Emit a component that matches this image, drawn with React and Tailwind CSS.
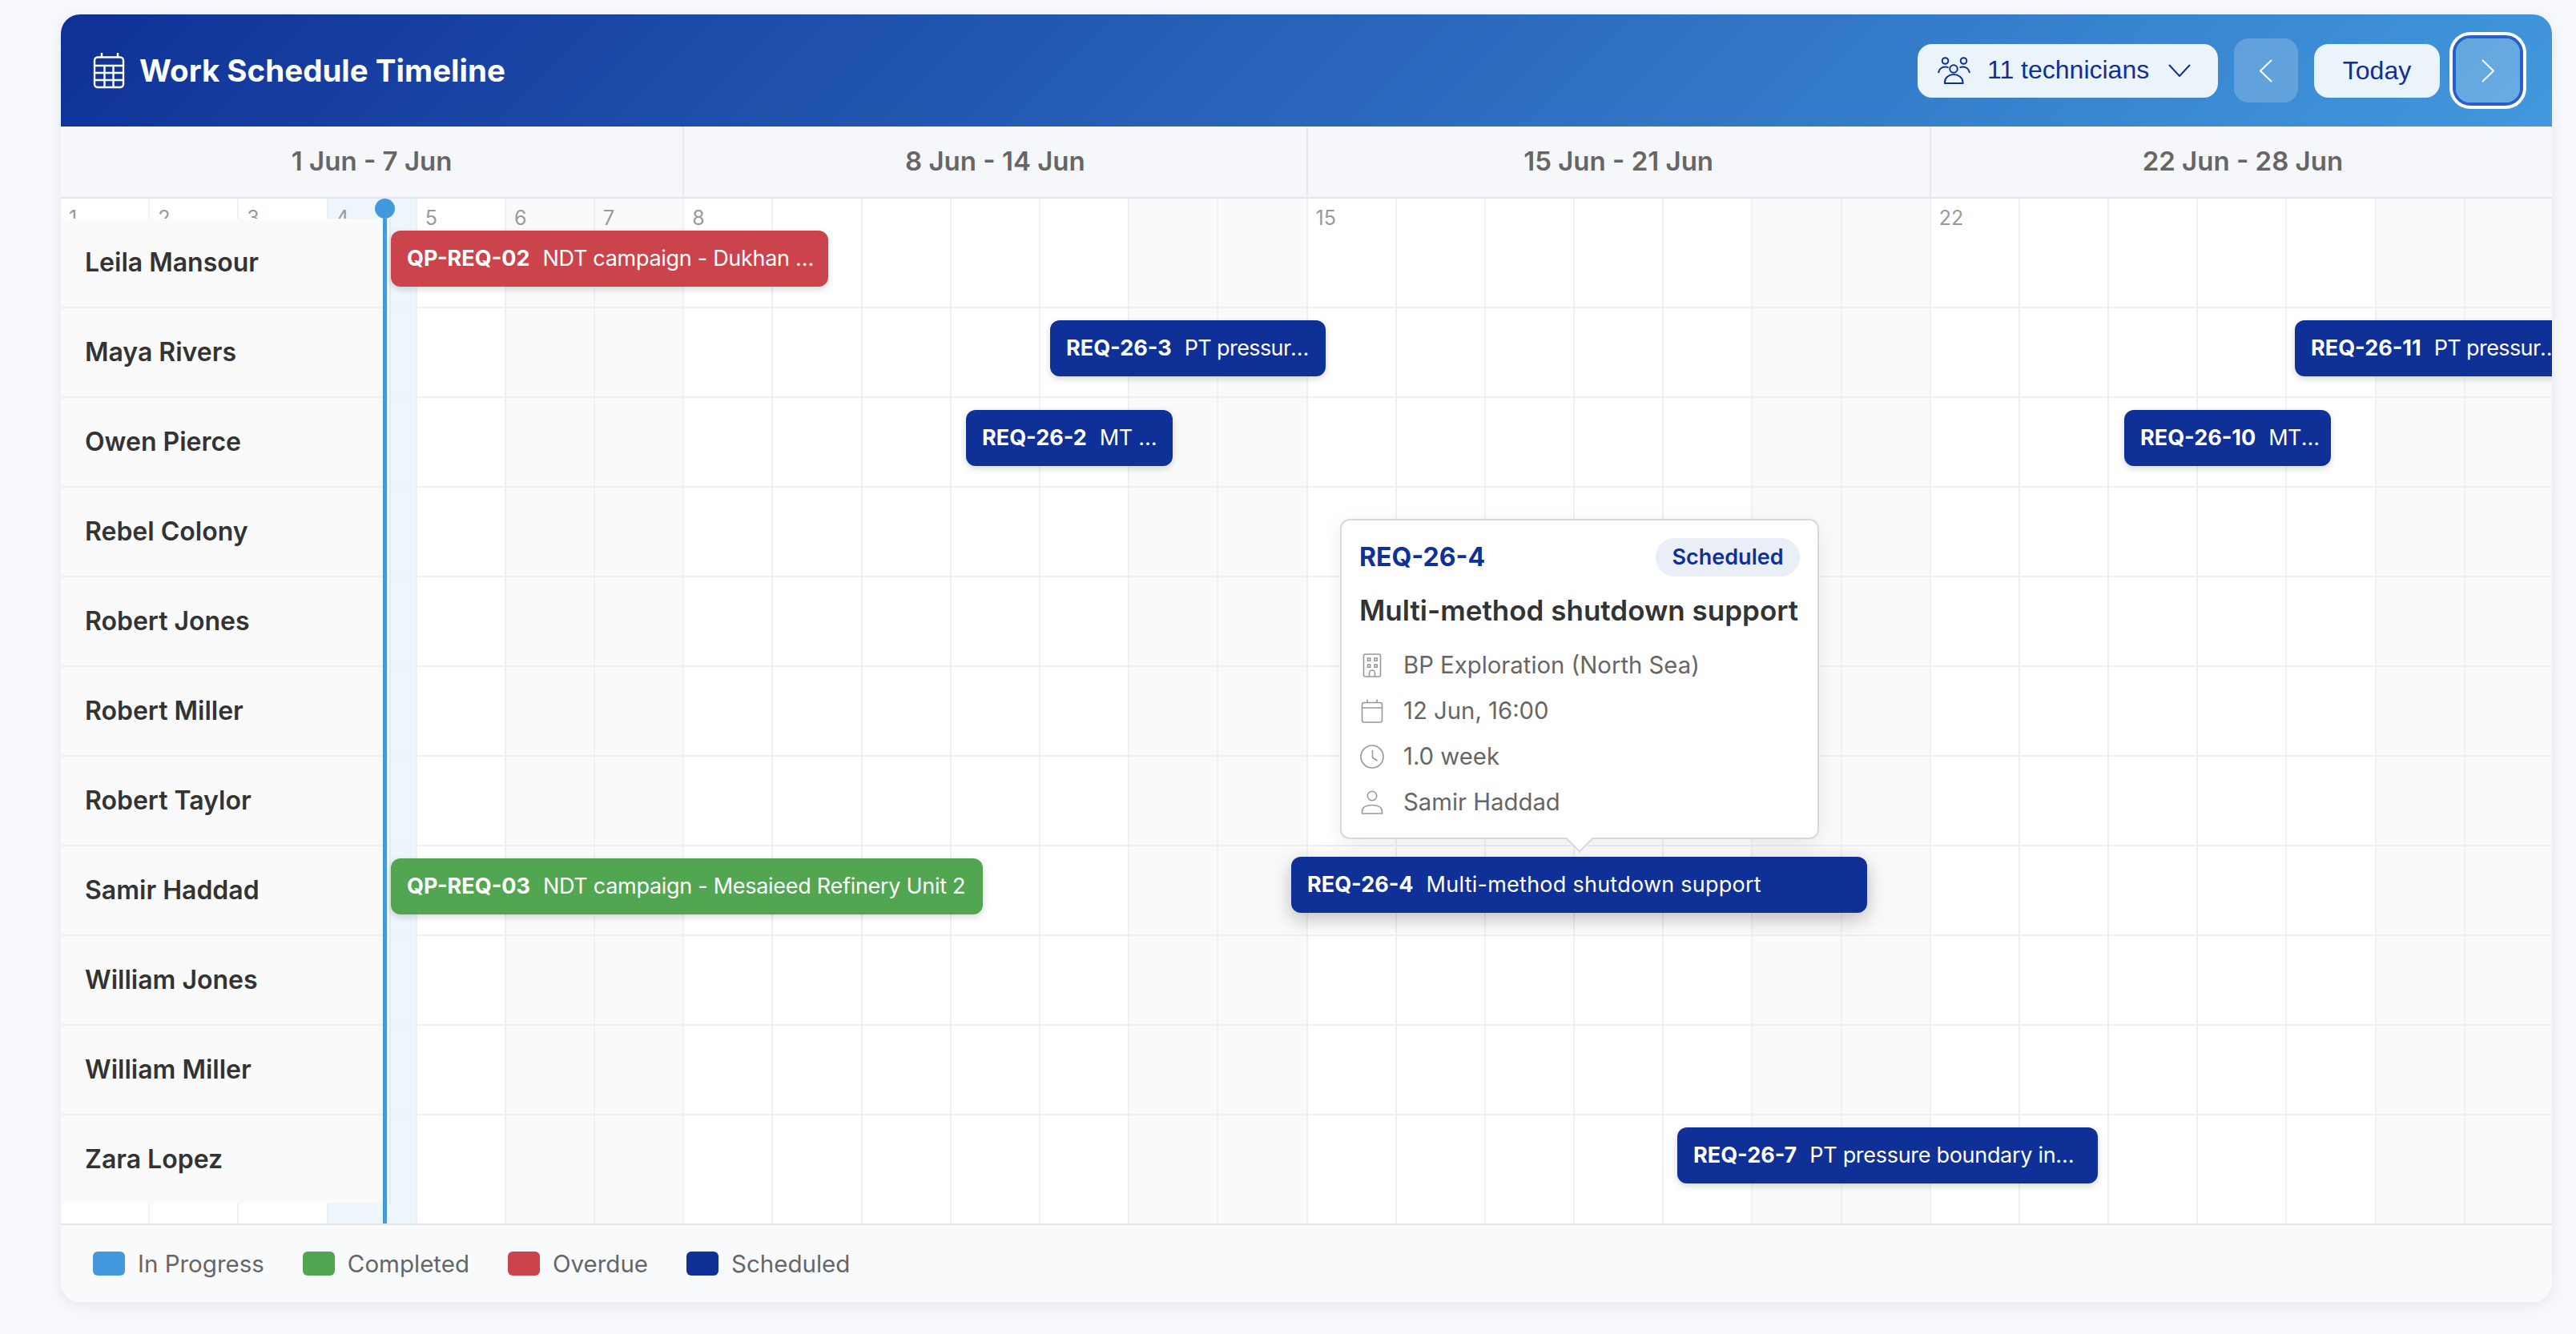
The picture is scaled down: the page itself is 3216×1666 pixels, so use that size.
const NAVY = "#0f3097";
const weeks = ["1 Jun - 7 Jun", "8 Jun - 14 Jun", "15 Jun - 21 Jun", "22 Jun - 28 Jun"];
const days = Array.from({ length: 28 }, (_, i) => i + 1);
const weekLabels = new Set([1, 2, 3, 4, 5, 6, 7, 8, 15, 22]);

const rows = [
  { name: "Leila Mansour", bars: [{ id: "QP-REQ-02", title: "NDT campaign - Dukhan Field Shutdown", left: 0, width: 546, cls: "bg-[#cb444b]", titleCls: "tracking-[-0.3px]", boxCls: "pr-[10px]" }] },
  {
    name: "Maya Rivers",
    bars: [
      { id: "REQ-26-3", title: "PT pressure boundary inspection", left: 823, width: 344, cls: "bg-[#0f3097]", titleCls: "tracking-[-0.6px]", boxCls: "pr-[14px]" },
      { id: "REQ-26-11", title: "PT pressure boundary inspection", left: 2377, width: 344, cls: "bg-[#0f3097]", titleCls: "tracking-[-0.6px]", boxCls: "pr-[8px]" },
    ],
  },
  {
    name: "Owen Pierce",
    bars: [
      { id: "REQ-26-2", title: "MT weld inspection", left: 718, width: 258, cls: "bg-[#0f3097]", titleCls: "tracking-[-0.3px]", boxCls: "pr-[12px]" },
      { id: "REQ-26-10", title: "MT weld inspection", left: 2164, width: 258, cls: "bg-[#0f3097]", titleCls: "tracking-[-0.6px]", boxCls: "pr-[12px]" },
    ],
  },
  { name: "Rebel Colony", bars: [] },
  { name: "Robert Jones", bars: [] },
  { name: "Robert Miller", bars: [] },
  { name: "Robert Taylor", bars: [] },
  {
    name: "Samir Haddad",
    bars: [
      { id: "QP-REQ-03", title: "NDT campaign - Mesaieed Refinery Unit 2", left: 0, width: 739, cls: "bg-[#52a651]", titleCls: "tracking-[-0.29px]" },
      { id: "REQ-26-4", title: "Multi-method shutdown support", left: 1124, width: 719, cls: "bg-[#0f3097] -translate-y-[2px] shadow-[0_8px_24px_rgba(0,0,0,0.25)]", titleCls: "tracking-[0.25px]" },
    ],
  },
  { name: "William Jones", bars: [] },
  { name: "William Miller", bars: [] },
  { name: "Zara Lopez", bars: [{ id: "REQ-26-7", title: "PT pressure boundary inspection round", left: 1606, width: 525, cls: "bg-[#0f3097]", titleCls: "tracking-[-0.3px]", boxCls: "pr-[28px]" }] },
];

const legend = [
  ["In Progress", "bg-[#4299dd]"],
  ["Completed", "bg-[#52a651]"],
  ["Overdue", "bg-[#cb444b]"],
  ["Scheduled", "bg-[#0f3097]"],
];

function CalendarGrid() {
  return (
    <svg width="40" height="46" viewBox="0 0 40 46" fill="none" stroke="white" strokeWidth="2.4" className="shrink-0">
      <rect x="2" y="6.5" width="36" height="37.5" rx="4" />
      <path d="M11 1v5M31 1v5M2 17h36M2 26h36M2 35h36M14.5 17v27M25.5 17v27" />
    </svg>
  );
}

function Users() {
  return (
    <svg width="42" height="34" viewBox="0 0 42 34" fill="none" stroke={NAVY} strokeWidth="2" className="shrink-0">
      <circle cx="10.5" cy="5" r="3.8" />
      <circle cx="33.5" cy="5" r="3.8" />
      <circle cx="21" cy="15" r="4.8" />
      <path d="M10 33v-1.5C10 26 15 22 21 22s11.5 4 11.5 9.5V33z" />
      <path d="M2 20c.8-4.600 4.200-7.500 8.500-7.500 1.500 0 2.800.3 4 1" />
      <path d="M41 20c-.8-4.600-4.200-7.500-8.500-7.500-1.500 0-2.800.3-4 1" />
    </svg>
  );
}

function Chevron({ dir, color, w, h, sw }) {
  const d =
    dir === "down"
      ? `M1 1L${w / 2} ${h - 1}L${w - 1} 1`
      : dir === "left"
      ? `M${w - 1} 1L1 ${h / 2}L${w - 1} ${h - 1}`
      : `M1 1L${w - 1} ${h / 2}L1 ${h - 1}`;
  return (
    <svg width={w} height={h} viewBox={`0 0 ${w} ${h}`} fill="none" stroke={color} strokeWidth={sw} className="shrink-0">
      <path d={d} />
    </svg>
  );
}

function Building() {
  return (
    <svg width="30" height="30" viewBox="0 0 30 30" fill="none" stroke="#999999" strokeWidth="1.6" className="shrink-0">
      <rect x="4.500" y="1" width="21" height="28" rx="2" />
      <rect x="9.500" y="6" width="3.200" height="3.200" />
      <rect x="18" y="6" width="3.200" height="3.200" />
      <rect x="9.500" y="14" width="3.200" height="3.200" />
      <rect x="18" y="14" width="3.200" height="3.200" />
      <path d="M11.500 29v-4.500a3.500 3.500 0 0 1 7 0V29" />
    </svg>
  );
}

function CalendarPlain() {
  return (
    <svg width="30" height="30" viewBox="0 0 30 30" fill="none" stroke="#999999" strokeWidth="1.6" className="shrink-0">
      <rect x="2.500" y="4.500" width="25" height="24.500" rx="2.500" />
      <path d="M2.500 11h25M9 .5v4M21 .5v4" />
    </svg>
  );
}

function Clock() {
  return (
    <svg width="30" height="30" viewBox="0 0 30 30" fill="none" stroke="#999999" strokeWidth="1.6" className="shrink-0">
      <circle cx="15" cy="15" r="14" />
      <path d="M15.500 7v9l6 4" />
    </svg>
  );
}

function Person() {
  return (
    <svg width="30" height="30" viewBox="0 0 30 30" fill="none" stroke="#999999" strokeWidth="1.6" className="shrink-0">
      <circle cx="15" cy="7" r="5.700" />
      <path d="M2.500 29v-2.500c0-5.500 5.500-8 12.500-8s12.500 2.500 12.500 8V29z" />
    </svg>
  );
}

function Bar({ bar }) {
  return (
    <div
      className={`absolute top-[15px] h-[70px] rounded-xl pl-5 flex items-center text-white shadow-[0_3px_8px_rgba(0,0,0,0.16)] ${bar.boxCls || "pr-5"} ${bar.cls}`}
      style={{ left: bar.left, width: bar.width }}
    >
      <div className="truncate text-[27px] leading-[40px]">
        <span className="font-bold mr-[16px]">{bar.id}</span>
        <span className={`font-normal ${bar.titleCls || ""}`}>{bar.title}</span>
      </div>
    </div>
  );
}

function InfoRow({ icon, text }) {
  return (
    <div className="flex items-center gap-[24px] pl-[1px] h-[57px] text-[29.3px] text-[#666666]">
      {icon}
      <span>{text}</span>
    </div>
  );
}

export default function App() {
  return (
    <div className="min-h-[1666px] bg-[#f8f9fd] pl-[76px] pr-[30px] pt-[18px] font-['Inter',sans-serif]">
      <div className="rounded-3xl overflow-hidden bg-white shadow-[0_4px_20px_rgba(0,0,0,0.08)]">
        <header className="h-[140px] flex items-center justify-between pl-[40px] pr-[40px] bg-[linear-gradient(135deg,#0f3097,#4299dd)]">
          <div className="flex items-center gap-[18px] text-white">
            <CalendarGrid />
            <h1 className="text-[38.5px] leading-[48px] font-bold">Work Schedule Timeline</h1>
          </div>
          <div className="flex items-center gap-5 font-['Liberation_Sans',sans-serif] text-[32px] text-[#0f3097]">
            <button className="w-[375px] h-[67px] rounded-[18px] bg-[#ebf3fb] flex items-center pl-[24px] gap-[21px]">
              <Users />
              <span className="-translate-y-[1px]">11 technicians</span>
              <span className="ml-[3px]"><Chevron dir="down" color={NAVY} w={28} h={16} sw={2} /></span>
            </button>
            <button className="w-20 h-20 rounded-[18px] bg-white/20 flex items-center justify-center">
              <Chevron dir="left" color="white" w={16} h={29} sw={2} />
            </button>
            <button className="w-[157px] h-[67px] rounded-[18px] bg-[#ebf3fb]">Today</button>
            <button className="w-20 h-20 rounded-[18px] bg-white/20 flex items-center justify-center outline-4 outline-[#2a5fc9] shadow-[0_0_0_8px_white]">
              <Chevron dir="right" color="white" w={16} h={29} sw={2} />
            </button>
          </div>
        </header>

        <div className="overflow-hidden h-[90px] bg-[#f6f7fb] border-b-2 border-[#e3e5ea]">
          <div className="grid grid-cols-4 w-[3113px] h-full">
            {weeks.map((w) => (
              <div key={w} className="flex items-center justify-center border-r-2 border-[#e8e9ed] last:border-r-0 text-[33px] font-semibold text-[#666666]">
                {w}
              </div>
            ))}
          </div>
        </div>

        <div className="relative h-[1280px] overflow-hidden">
          <div className="grid grid-cols-[repeat(28,1fr)] w-[3113px] h-full">
            {days.map((d) => {
              const weekend = d % 7 === 6 || d % 7 === 0;
              const bg = d === 4 ? "bg-[#edf5fd]" : weekend ? "bg-[#fafafa]" : "bg-white";
              return (
                <div key={d} className={`border-r-2 border-[#f0f0f2] pl-[10px] pt-[8px] text-[25px] leading-[32px] text-[#999999] ${bg}`}>
                  {weekLabels.has(d) ? d : ""}
                </div>
              );
            })}
          </div>

          <div className="absolute left-0 right-0 top-[25px] flex flex-col">
            {rows.map((r) => (
              <div key={r.name} className="flex h-[112px] border-b-2 border-[#f0f0f2] last:border-b-0 last:h-[110px]">
                <div className="w-[412px] shrink-0 bg-[#fafafa] border-r-2 border-[#e8e8ec] pl-[30px] flex items-center text-[32px] font-semibold text-[#333333]">
                  {r.name}
                </div>
                <div className="relative flex-1">
                  {r.bars.map((b) => (
                    <Bar key={b.id} bar={b} />
                  ))}
                </div>
              </div>
            ))}
          </div>

          <div className="absolute top-[25px] bottom-0 left-[402px] w-[5px] bg-[#4299dd]" />
          <div className="absolute top-0 left-[392px] w-[25px] h-[25px] rounded-full bg-[#4299dd]" />

          <div className="absolute left-[1597px] top-[400px] w-[598px] h-[400px] rounded-xl bg-white border-2 border-[#d9d9d9] px-[22px] pt-[22px] shadow-[0_6px_24px_rgba(0,0,0,0.08)]">
            <div className="flex items-center justify-between">
              <span className="text-[32px] font-bold text-[#0f3097]">REQ-26-4</span>
              <span className="h-[48px] w-[180px] rounded-full bg-[#e9eef7] flex items-center justify-center text-[27px] font-semibold text-[#0f3097]">
                Scheduled
              </span>
            </div>
            <div className="mt-[18px] text-[35px] leading-[48px] font-semibold text-[#333333] whitespace-nowrap">Multi-method shutdown support</div>
            <div className="mt-[16px] flex flex-col">
              <InfoRow icon={<Building />} text="BP Exploration (North Sea)" />
              <InfoRow icon={<CalendarPlain />} text="12 Jun, 16:00" />
              <InfoRow icon={<Clock />} text="1.0 week" />
              <InfoRow icon={<Person />} text="Samir Haddad" />
            </div>
            <div className="absolute left-1/2 -bottom-[14px] -ml-[12px] w-[24px] h-[24px] rotate-45 bg-white border-r-2 border-b-2 border-[#d9d9d9]" />
          </div>
        </div>

        <footer className="h-[98px] bg-[#f9fafb] border-t-2 border-[#e3e5ea] flex items-center pl-[40px] gap-12">
          {legend.map(([label, cls]) => (
            <div key={label} className="flex items-center gap-4 text-[29.5px] text-[#666666]">
              <span className={`w-10 h-[30px] rounded-md ${cls}`} />
              <span>{label}</span>
            </div>
          ))}
        </footer>
      </div>
    </div>
  );
}
